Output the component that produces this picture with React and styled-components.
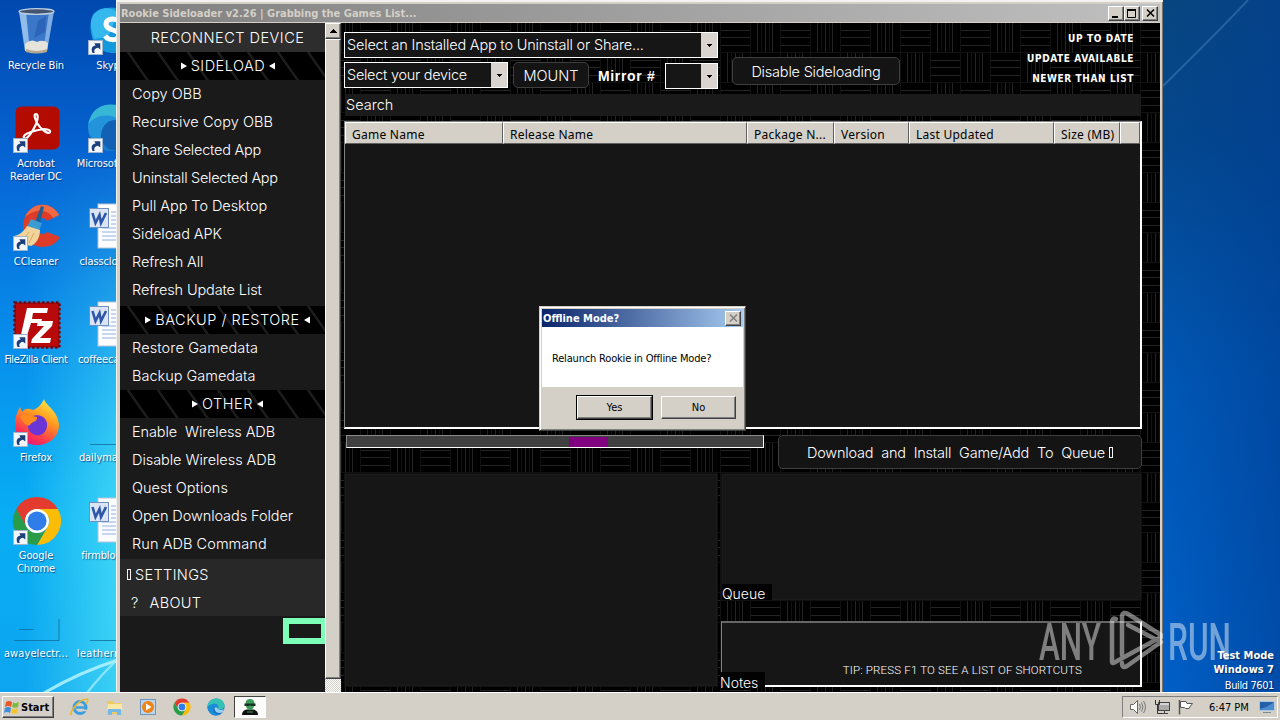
import React from 'react';
import styled, { createGlobalStyle, css } from 'styled-components';

const GlobalStyle = createGlobalStyle`
    * {
        box-sizing: border-box;
    }
    body {
        margin: 0;
        overflow: hidden;
    }
`;

const tahoma = `"DejaVu Sans Condensed", "DejaVu Sans", "Noto Sans", sans-serif`;
const noto = `"Noto Sans", "Open Sans", sans-serif`;
const thin = `Inter, "Liberation Sans", Arial, sans-serif`;

/* ---------- desktop ---------- */

const Desktop = styled.div`
    position: relative;
    width: 1280px;
    height: 720px;
    display: flex;
    flex-direction: column;
    overflow: hidden;
    background: #0a63c8;
`;

const Wallpaper = styled.svg`
    position: absolute;
    inset: 0;
`;

const IconGrid = styled.div`
    position: relative;
    flex: 1;
    display: grid;
    grid-template-columns: 72px 76px;
    grid-template-rows: repeat(7, 98px);
    grid-auto-flow: column;
    justify-content: start;
    padding-top: 7px;
    column-gap: 1px;
    height: 692px;
`;

const IconCell = styled.div`
    display: flex;
    flex-direction: column;
    align-items: center;
    min-width: 0;
    svg {
        flex: none;
        margin-left: 2px;
        overflow: visible;
    }
`;

const IconLabel = styled.span`
    margin-top: 4px;
    color: #fff;
    font-family: ${tahoma};
    font-size: 11px;
    line-height: 13px;
    letter-spacing: ${p => p.$track || -0.1}px;
    text-align: center;
    white-space: pre;
    text-shadow: 1px 1px 1px rgba(0,20,70,0.6);
`;

/* ---------- main window ---------- */

const Window = styled.div`
    position: absolute;
    left: 116px;
    top: 0;
    width: 1047px;
    height: 692px;
    padding: 4px 3px 0 4px;
    display: flex;
    flex-direction: column;
    background: #d4d0c8;
    box-shadow: inset 1px 2px 0 #f4f2ee, inset -1px 0 0 #77756e, inset 0 1px 0 #d4d0c8;
`;

const TitleBar = styled.div`
    height: 19px;
    flex: none;
    display: flex;
    align-items: center;
    padding: 0 2px 0 1px;
    background: linear-gradient(90deg, #808080, #c0c0c0);
    border-bottom: 1px solid #d4d0c8;
    color: #d4d0c8;
    font: bold 11px ${tahoma};
`;

const TitleText = styled.span`
    flex: 1;
    white-space: pre;
    letter-spacing: ${p => p.$track || 0}px;
`;

const raised = css`
    background: #d4d0c8;
    border: 1px solid;
    border-color: #fff #404040 #404040 #fff;
    box-shadow: inset -1px -1px 0 #808080;
`;

const CaptionButton = styled.div`
    ${raised}
    width: 16px;
    height: 15px;
    display: flex;
    align-items: center;
    justify-content: center;
    margin-left: ${p => p.$gap || 0}px;
`;

const Body = styled.div`
    flex: 1;
    display: flex;
    min-height: 0;
`;

const Sidebar = styled.div`
    width: 205px;
    background: #1a1a1a;
    display: flex;
    flex-direction: column;
    overflow: hidden;
    font-family: ${thin};
    font-weight: 300;
    font-size: 14.5px;
    color: #fff;
`;

const Reconnect = styled.div`
    height: 29px;
    line-height: 30px;
    padding-left: 10px;
    text-align: center;
    background: #2d2d2d;
    letter-spacing: 0.5px;
    flex: none;
`;

const SectionHead = styled.div`
    height: 28px;
    flex: none;
    display: flex;
    align-items: center;
    justify-content: center;
    gap: 4px;
    padding: 0 0 1px ${p => p.$shift || 0}px;
    margin-top: ${p => p.$top || 0}px;
    letter-spacing: 0.5px;
    white-space: pre;
    background: repeating-linear-gradient(55deg, #000 0, #000 21px, #1c1c1c 21.5px, #1c1c1c 23.5px, #000 24px, #000 24.6px);
`;

const SideItem = styled.div`
    height: 28px;
    line-height: 28px;
    flex: none;
    padding-left: 12px;
    white-space: pre;
    letter-spacing: ${p => p.$track || 0}px;
`;

const SideFooter = styled.div`
    margin-top: 1px;
    padding-top: 1px;
    background: #282828;
    flex: none;
`;

const FooterItem = styled.div`
    height: 28px;
    display: flex;
    align-items: center;
    padding-left: ${p => p.$pad}px;
    gap: ${p => p.$gap}px;
    letter-spacing: 0.35px;
`;

const Tofu = styled.i`
    display: inline-block;
    width: 4px;
    height: 11px;
    border: 1px solid #f4f4f4;
`;

const GreenFrame = styled.div`
    width: 44px;
    height: 26px;
    margin: 2px 0 0 163px;
    flex: none;
    border: 6px solid #7dffb8;
`;

const Scrollbar = styled.div`
    width: 16px;
    display: flex;
    flex-direction: column;
    background: repeating-conic-gradient(#fff 0 25%, #d4d0c8 0 50%) 0 0 / 2px 2px;
`;

const ScrollButton = styled.div`
    ${raised}
    height: 16px;
    display: flex;
    align-items: center;
    justify-content: center;
`;

const ScrollThumb = styled.div`
    ${raised}
    height: 640px;
`;

const Main = styled.div`
    position: relative;
    flex: 1;
    display: flex;
    flex-direction: column;
    padding: 9px 18px 0 3px;
    background: #000;
    font-family: ${thin};
    font-weight: 300;
    color: #fff;
`;

const Weave = styled.svg`
    position: absolute;
    inset: 0;
    width: 100%;
    height: 100%;
`;

const TopArea = styled.div`
    position: relative;
    display: flex;
    align-items: flex-start;
    height: 62px;
`;

const Pickers = styled.div`
    width: 374px;
    display: flex;
    flex-direction: column;
    gap: 4px;
`;

const PickerRow = styled.div`
    display: flex;
    align-items: flex-start;
`;

const Combo = styled.div`
    display: flex;
    width: ${p => p.$w}px;
    height: 26px;
    margin-top: ${p => p.$top || 0}px;
    border: 1px solid #fff;
    background: #161616;
    font-size: 14.5px;
    line-height: 24px;
    padding-left: 2px;
    letter-spacing: ${p => p.$track || 0}px;
    white-space: pre;
`;

const ComboArrow = styled.div`
    margin-left: auto;
    width: 16px;
    display: flex;
    align-items: center;
    justify-content: center;
    background: #d9d4cf;
`;

const DarkButton = styled.div`
    width: ${p => p.$w}px;
    height: ${p => p.$h}px;
    margin: ${p => p.$m || 0};
    display: flex;
    align-items: center;
    justify-content: center;
    gap: 4px;
    background: #141414;
    border: 1px solid #3f3f3f;
    border-radius: 5px;
    font-size: 14.5px;
    letter-spacing: ${p => p.$track || 0}px;
    word-spacing: ${p => p.$word || 0}px;
    white-space: nowrap;
`;

const MirrorLabel = styled.span`
    margin-left: 9px;
    width: 67px;
    color: #fff;
    font: bold 14px/28px "Liberation Sans", Arial, sans-serif;
    letter-spacing: 0.65px;
    white-space: nowrap;
`;

const Legend = styled.div`
    margin: -3px 8px 0 auto;
    display: flex;
    flex-direction: column;
    align-items: flex-end;
    color: #fff;
    font: bold 10px/20px ${tahoma};
    span {
        letter-spacing: 0.6px;
    }
`;

const SearchBox = styled.div`
    position: relative;
    height: 22px;
    width: 796px;
    margin-left: 1px;
    padding-left: 1px;
    background: #1a1a1a;
    font-size: 14.5px;
    line-height: 22px;
    letter-spacing: 0;
`;

const GameList = styled.div`
    position: relative;
    margin-top: 5px;
    width: 798px;
    height: 308px;
    background: #161616;
    border: solid;
    border-width: 1px 2px 2px 1px;
    border-color: #808080 #fff #fff #808080;
`;

const ListHeader = styled.div`
    display: flex;
    height: 22px;
    background: #d4d0c8;
    font: 12px/23px ${noto};
    color: #000;
`;

const HeadCell = styled.div`
    width: ${p => p.$w}px;
    flex: ${p => (p.$w ? 'none' : 1)};
    padding-left: 6px;
    letter-spacing: 0.25px;
    white-space: nowrap;
    border: 1px solid;
    border-color: #fff #606060 #606060 #fff;
`;

const ActionRow = styled.div`
    position: relative;
    display: flex;
    justify-content: space-between;
    align-items: flex-start;
    margin-top: 6px;
    padding-left: 2px;
`;

const Progress = styled.div`
    width: 418px;
    height: 13px;
    padding: 1px 0 0 222px;
    border: 1px solid;
    border-color: #8a8a8a #fff #fff #8a8a8a;
    background: #404040;
`;

const Chunk = styled.div`
    width: 39px;
    height: 10px;
    background: #800080;
`;

const LowerArea = styled.div`
    position: relative;
    margin-top: 4px;
    height: 215px;
    display: flex;
    gap: 3px;
`;

const Panel = styled.div`
    width: ${p => p.$w || 374}px;
    height: ${p => p.$h || 214}px;
    background: #161616;
    border: 1px solid #101010;
    box-shadow: inset 0 0 0 1px #1b1b1b;
    display: flex;
    align-items: flex-end;
`;

const RightStack = styled.div`
    display: flex;
    flex-direction: column;
    gap: 20px;
`;

const NotesPanel = styled.div`
    position: relative;
    width: 421px;
    height: 66px;
    padding: 40px 58px 0 0;
    text-align: right;
    background: #161616;
    border: solid;
    border-width: 2px 2px 2px 1px;
    border-color: #666 #fff #fff #808080;
    font: 300 11.5px/14px Roboto, ${thin};
    letter-spacing: 0.17px;
    color: #fff;
    white-space: nowrap;
`;

const Tag = styled.span`
    width: ${p => p.$w}px;
    height: 16px;
    background: #020202;
    font: 300 14px/20px ${thin};
    padding-left: 0;
    letter-spacing: 0;
`;

const NotesTag = styled(Tag)`
    position: absolute;
    left: -2px;
    bottom: -3px;
    line-height: 21px;
    text-align: left;
`;

/* ---------- dialog ---------- */

const Dialog = styled.div`
    position: absolute;
    left: 539px;
    top: 306px;
    width: 207px;
    height: 125px;
    padding: 2px;
    background: #d4d0c8;
    border: 1px solid;
    border-color: #d4d0c8 #404040 #404040 #d4d0c8;
    box-shadow: inset 1px 1px 0 #fff, inset -1px -1px 0 #808080;
    font: 11px ${tahoma};
    color: #000;
`;

const DialogTitle = styled.div`
    height: 18px;
    display: flex;
    align-items: center;
    padding: 0 2px 0 1px;
    background: linear-gradient(90deg, #0a246a, #a6caf0);
    color: #fff;
    font-weight: bold;
`;

const DialogText = styled.div`
    height: 60px;
    padding-left: 10px;
    line-height: 63px;
    background: #fff;
    letter-spacing: -0.18px;
    white-space: nowrap;
`;

const DialogButtons = styled.div`
    display: flex;
    justify-content: flex-end;
    gap: 9px;
    padding: 9px 7px 0 0;
`;

const DialogButton = styled.div`
    ${raised}
    width: 75px;
    height: 23px;
    line-height: 22px;
    text-align: center;
    outline: ${p => (p.$focus ? '1px solid #000' : 'none')};
    outline-offset: 0;
`;

/* ---------- taskbar ---------- */

const Taskbar = styled.div`
    position: relative;
    height: 28px;
    flex: none;
    display: flex;
    align-items: center;
    padding: 2px 2px 0;
    background: #d4d0c8;
    box-shadow: inset 0 1px 0 #fff;
    font: 11px ${tahoma};
    color: #000;
`;

const StartButton = styled.div`
    ${raised}
    width: 52px;
    height: 22px;
    display: flex;
    align-items: center;
    gap: 1px;
    padding-left: 1px;
    font-weight: bold;
    letter-spacing: 0;
`;

const QuickLaunch = styled.div`
    display: flex;
    align-items: center;
    gap: 14px;
    margin-left: 16px;
`;

const ActiveTask = styled.div`
    width: 32px;
    height: 22px;
    margin-left: 8px;
    display: flex;
    justify-content: center;
    align-items: center;
    background: #fbfbfa;
    border: 1px solid;
    border-color: #404040 #fff #fff #404040;
`;

const Tray = styled.div`
    margin-left: auto;
    width: 156px;
    height: 22px;
    display: flex;
    align-items: center;
    padding: 0 2px 0 6px;
    border: 1px solid;
    border-color: #808080 #fff #fff #808080;
    svg {
        flex: none;
        margin-right: 7px;
    }
    svg:last-child {
        margin: 0 0 0 auto;
    }
`;

const Clock = styled.span`
    margin-left: 7px;
    white-space: nowrap;
`;

const BuildInfo = styled.div`
    position: absolute;
    right: 6px;
    top: 649px;
    color: #fff;
    text-align: right;
    font: bold 11px/14px ${tahoma};
    text-shadow: 1px 1px 1px rgba(0,10,50,0.6);
    p {
        margin: 0;
    }
    p:last-child {
        margin-top: 2px;
        font-weight: normal;
        letter-spacing: -0.4px;
    }
`;

const Watermark = styled.svg`
    position: absolute;
    left: 1030px;
    top: 605px;
    opacity: 0.45;
`;

/* ---------- drawings ---------- */

const Shortcut = () => (
    <g transform="translate(0 33)">
        <rect x="0.5" y="0.5" width="14" height="14" fill="#f2f6fb" stroke="#9fb4cc" />
        <path d="M4.6 13 C2.6 9 4 6 7.6 5.6 L6.3 3.2 L12.3 3.2 L12.3 9.6 L10 7.8 C6.6 8.6 5.6 10.4 6.8 13Z" fill="#1c3f7a" />
    </g>
);

const Icon = ({ children, plain }) => (
    <svg width="48" height="48" viewBox="0 0 48 48">
        {children}
        {!plain && <Shortcut />}
    </svg>
);

const RecycleArt = () => (
    <Icon plain>
        <path d="M6 4 L12 44 Q24 48 34 44 L41 4Z" fill="#4f86cf" fillOpacity="0.75" />
        <path d="M6 4 L12 44 L17 45 L13 5Z" fill="#a8cdf2" fillOpacity="0.8" />
        <path d="M36 5 L30 45 L34 44 L41 4Z" fill="#91b9e8" fillOpacity="0.8" />
        <path d="M25 14 L33 9 L32 25 L21 31Z" fill="#1f56ab" fillOpacity="0.55" />
        <path d="M12 37 Q18 31 24 35 Q30 32 35 36 L34 44 Q23 47 12 44Z" fill="#e6e4da" />
        <path d="M13 42 Q24 46 34 42 L34 45 Q23 48 13 45Z" fill="#b4a893" />
        <ellipse cx="23.5" cy="4.5" rx="17.5" ry="2.8" fill="#42546e" stroke="#bfd0e2" strokeWidth="1.3" />
    </Icon>
);

const AcrobatArt = () => (
    <Icon>
        <rect x="2.5" y="1.5" width="44" height="43" rx="6" fill="#b30b00" />
        <path d="M11 33 C9 30 16 27 25 25 C33 23 38 25 37 27 C36 30 28 25 24 18 C21 12 21 9 23 9 C26 9 25 17 20 25 C16 32 12 35 11 33Z" fill="none" stroke="#fff" strokeWidth="2.2" />
    </Icon>
);

const CCleanerArt = () => (
    <Icon>
        <path d="M46 12 C38 -3 18 -1 12 14 C6 30 14 43 29 44 C38 44 44 40 47 34 L34 29 C29 34 22 29 24 21 C26 14 31 13 34 18Z" fill="#de3c28" />
        <path d="M46 12 C38 -3 18 -1 12 14 C24 4 36 7 40 15Z" fill="#f06a45" />
        <path d="M28 3 L31 4 L27 20 L22 19Z" fill="#1f5f93" />
        <path d="M18 16 L29 20 L26 28 L14 24Z" fill="#3b9bd3" />
        <path d="M14 23 L27 27 C27 34 24 40 18 43 L1 39 L1 33 C7 32 11 28 14 23Z" fill="#f2d49b" />
        <path d="M16 29 L10 37 M21 30 L16 40" stroke="#d7a95c" fill="none" />
    </Icon>
);

const FileZillaArt = () => (
    <Icon>
        <rect x="1.5" y="1.5" width="45" height="45" fill="#b00000" stroke="#6c0a10" strokeWidth="2.4" strokeDasharray="2.4 2.2" />
        <rect x="3" y="3" width="42" height="42" fill="#b80a0a" />
        <path d="M14 7 H35 L34 12 H20 L19 18 H29 L28 22 H18 L13 38 H7Z" fill="#fff" />
        <path d="M25 20 H40 L39 25 L27 37 H38 L37 42 H18 L19 38 L31 25 H24Z" fill="#fff" />
    </Icon>
);

const FirefoxArt = () => (
    <Icon>
        <defs>
            <linearGradient id="fx" x1="0.8" y1="0" x2="0.3" y2="1">
                <stop offset="0" stopColor="#fff04a" />
                <stop offset="0.4" stopColor="#ff9a1f" />
                <stop offset="0.8" stopColor="#ff3550" />
                <stop offset="1" stopColor="#e3157f" />
            </linearGradient>
        </defs>
        <path d="M31 0 C32 6 45 11 46 26 C46 38 36 46 24 46 C11 46 2 37 2 25 C2 17 5 12 7 8 L9 13 C12 9 15 9 20 11 C24 10 29 5 31 0Z" fill="url(#fx)" />
        <path d="M15 23 C16 15 31 13 34 24 C35 33 28 38 22 36 C16 34 14 29 15 23Z" fill="#6a35d4" />
        <path d="M7 17 C13 14 19 17 24 18 C25 23 19 22 17 26 C14 28 10 24 7 17Z" fill="#ff8a1e" />
    </Icon>
);

const ChromeMark = () => (
    <>
        <path d="M3.2 12 A24 24 0 0 1 44.8 12 L24 12 A12 12 0 0 0 13.6 30Z" fill="#e33b2e" />
        <path d="M44.8 12 A24 24 0 0 1 24 48 L34.4 30 A12 12 0 0 0 34.4 18 L24 12Z" fill="#fbbc05" />
        <path d="M24 48 A24 24 0 0 1 3.2 12 L13.6 30 A12 12 0 0 0 34.4 30Z" fill="#2a9b48" />
        <circle cx="24" cy="24" r="12" fill="#fff" />
        <circle cx="24" cy="24" r="9.6" fill="#2f7de8" />
    </>
);

const ChromeArt = () => <Icon><ChromeMark /></Icon>;

const SkypeArt = () => (
    <Icon>
        <path d="M14 2 C26 -2 40 2 44 14 C50 28 44 44 30 46 C18 47 6 42 4 30 C0 16 4 6 14 2Z" fill="#1499dd" />
        <path d="M5 8 C12 -1 24 0 30 6 L20 30 L6 32 C2 20 2 14 5 8Z" fill="#35b8ee" />
        <path d="M32 15 C26 10 18 12 18 17 C18 24 31 22 31 28 C31 34 21 34 17 29" fill="none" stroke="#fff" strokeWidth="5" />
    </Icon>
);

const EdgeMark = () => (
    <>
        <circle cx="24" cy="24" r="24" fill="#1470c4" />
        <path d="M0 24 C2 -6 46 -8 48 20 C48 30 36 34 29 30 C34 20 24 12 14 16 C6 18 2 22 0 24Z" fill="#35c2b6" />
        <path d="M14 16 C24 12 34 20 29 28 C22 20 14 26 17 36 C21 44 30 46 38 43 C22 54 2 44 0 24 C4 20 8 17 14 16Z" fill="#1c8ed8" />
        <path d="M29 30 C36 34 44 32 46 29 L44 37 C34 44 22 40 20 30 C19 25 24 22 29 28Z" fill="#c9efff" fillOpacity="0.75" />
    </>
);

// the desktop shortcut only shows the left side of the wave
const EdgeArt = () => (
    <Icon>
        <path d="M0 24 C2 -6 46 -8 48 20 L40 46 H18 C6 42 0 34 0 24Z" fill="#1b78cc" />
        <path d="M0 20 C4 0 18 -2 30 0 L40 20 C28 10 8 8 0 20Z" fill="#36b7d6" />
        <path d="M0 20 C8 8 24 8 34 16 C22 12 12 20 13 34 L14 40 C3 36 0 28 0 20Z" fill="#2394dc" />
        <path d="M34 16 C22 12 12 20 13 34 C16 44 26 47 36 46Z" fill="#1361b5" />
    </Icon>
);

const WordArt = () => (
    <Icon plain>
        <rect x="10" y="1" width="36" height="44" fill="#fdfdff" stroke="#b7c4d8" />
        <path d="M23 9 H42 M23 13 H42 M23 17 H42 M23 21 H42 M14 25 H42 M14 29 H42 M14 33 H42 M14 37 H42" stroke="#8fb0de" />
        <rect x="1.5" y="5.5" width="19" height="19" fill="#dbe5f5" stroke="#6f8fc2" />
        <path d="M4.5 10 L7.5 20 L11.5 12 L13 20 L18 10" fill="none" stroke="#2d57a8" strokeWidth="2.6" />
    </Icon>
);

const BlankArt = ({ full }) => (
    <Icon plain>
        <path d={full ? 'M1 45.5 H46 V24 M6 34.5 H21' : 'M2 45.5 H48'} fill="none" stroke="#0f6d9b" strokeOpacity="0.8" />
    </Icon>
);

const Arrow = ({ left }) => (
    <svg width="6" height="8" viewBox="0 0 6 8">
        <path d={left ? 'M6 0.5 V7.5 L0 4Z' : 'M0 0.5 V7.5 L6 4Z'} fill="#fff" />
    </svg>
);

const DownArrow = () => (
    <svg width="5" height="3" viewBox="0 0 5 3" shapeRendering="crispEdges"><path d="M0 0 H5 L2.5 3Z" /></svg>
);

const Backdrop = () => (
    <Wallpaper width="1280" height="692" viewBox="0 0 1280 692">
        <defs>
            <linearGradient id="leftSky" x1="0" y1="0" x2="0" y2="1">
                <stop offset="0" stopColor="#0048ae" />
                <stop offset="0.25" stopColor="#0667d6" />
                <stop offset="0.5" stopColor="#078fec" />
                <stop offset="0.75" stopColor="#08aef4" />
                <stop offset="1" stopColor="#0da5f0" />
            </linearGradient>
            <linearGradient id="glow" x1="0" y1="0" x2="1" y2="0">
                <stop offset="0.2" stopColor="#5ff0f8" stopOpacity="0" />
                <stop offset="1" stopColor="#5ff0f8" stopOpacity="0.6" />
            </linearGradient>
            <linearGradient id="glowFade" x1="0" y1="0" x2="0" y2="1">
                <stop offset="0.2" stopColor="#000" />
                <stop offset="0.7" stopColor="#fff" />
            </linearGradient>
            <mask id="glowMask"><rect width="120" height="692" fill="url(#glowFade)" /></mask>
            <linearGradient id="rightSky" x1="0" y1="0" x2="0" y2="1">
                <stop offset="0" stopColor="#08467f" />
                <stop offset="0.2" stopColor="#04478d" />
                <stop offset="0.55" stopColor="#0058b6" />
                <stop offset="1" stopColor="#0060c8" />
            </linearGradient>
            <linearGradient id="rightEdge" x1="0" y1="0" x2="1" y2="0">
                <stop offset="0" stopColor="#003c90" stopOpacity="0" />
                <stop offset="1" stopColor="#003c90" stopOpacity="0.55" />
            </linearGradient>
        </defs>
        <rect width="640" height="692" fill="url(#leftSky)" />
        <rect width="120" height="692" fill="url(#glow)" mask="url(#glowMask)" />
        <rect x="1160" width="120" height="692" fill="url(#rightSky)" />
        <rect x="1160" width="120" height="692" fill="url(#rightEdge)" />
        <path d="M1163 86 Q1215 35 1248 0" stroke="#6fa5d8" strokeOpacity="0.3" strokeWidth="2" fill="none" />
        <path d="M44 693 Q80 672 118 660" stroke="#b5f4ff" strokeOpacity="0.85" strokeWidth="3" fill="none" />
        <path d="M87 693 Q100 676 118 659" stroke="#9deeff" strokeOpacity="0.8" strokeWidth="2.4" fill="none" />
    </Wallpaper>
);

const WeaveBack = () => (
    <Weave>
        <defs>
            <pattern id="weave" x="19" y="0" width="60" height="60" patternUnits="userSpaceOnUse">
                <path
                    d="M0 7.5 H30 M0 14.5 H30 M0 22.5 H30 M37.5 0 V30 M45.5 0 V30 M52.5 0 V30 M30 37.5 H60 M30 44.5 H60 M30 52.5 H60 M7.5 30 V60 M15.5 30 V60 M22.5 30 V60"
                    stroke="#242424"
                />
                <path
                    d="M0 29.5 H60 M0 59.5 H60 M0.5 0 V60 M30.5 0 V60 M41.5 0 V30 M49.5 0 V30 M11.5 30 V60 M19.5 30 V60"
                    stroke="#111"
                />
            </pattern>
        </defs>
        <rect width="100%" height="100%" fill="url(#weave)" />
    </Weave>
);

const icons = [
    { art: <RecycleArt />, label: 'Recycle Bin' },
    { art: <AcrobatArt />, label: 'Acrobat\nReader DC' },
    { art: <CCleanerArt />, label: 'CCleaner' },
    { art: <FileZillaArt />, label: 'FileZilla Client', track: -0.4 },
    { art: <FirefoxArt />, label: 'Firefox' },
    { art: <ChromeArt />, label: 'Google\nChrome' },
    { art: <BlankArt full />, label: 'awayelectr...', track: 0.1 },
    { art: <SkypeArt />, label: 'Skype' },
    { art: <EdgeArt />, label: 'Microsoft Ed...' },
    { art: <WordArt />, label: 'classclothe...' },
    { art: <WordArt />, label: 'coffeecame...' },
    { art: <BlankArt />, label: 'dailymakes...' },
    { art: <WordArt />, label: 'firmblocks...' },
    { art: <BlankArt />, label: 'leathermay...', track: 0.3 },
];

const sideload = [
    ['Copy OBB', 0],
    ['Recursive Copy OBB', 0.05],
    ['Share Selected App', -0.23],
    ['Uninstall Selected App', -0.28],
    ['Pull App To Desktop', -0.05],
    ['Sideload APK', -0.08],
    ['Refresh All', -0.1],
    ['Refresh Update List', -0.12],
];
const backup = [['Restore Gamedata', 0.13], ['Backup Gamedata', 0]];
const other = [
    ['Enable  Wireless ADB', -0.1],
    ['Disable Wireless ADB', -0.05],
    ['Quest Options', 0],
    ['Open Downloads Folder', -0.08],
    ['Run ADB Command', 0.07],
];

const columns = [
    ['Game Name', 158],
    ['Release Name', 244],
    ['Package N...', 87],
    ['Version', 75],
    ['Last Updated', 145],
    ['Size (MB)', 66],
    ['', 0],
];

const SideItems = ({ items }) => items.map(([text, track]) => <SideItem key={text} $track={track}>{text}</SideItem>);

const App = () => {
    return (
        <Desktop>
            <GlobalStyle />
            <Backdrop />
            <IconGrid>
                {icons.map(item => (
                    <IconCell key={item.label}>
                        {item.art}
                        <IconLabel $track={item.track}>{item.label}</IconLabel>
                    </IconCell>
                ))}
            </IconGrid>
            <BuildInfo>
                <p>Test Mode</p>
                <p>Windows 7</p>
                <p>Build 7601</p>
            </BuildInfo>

            <Window>
                <TitleBar>
                    <TitleText>Rookie Sideloader v2.26 | Grabbing the Games List...</TitleText>
                    <CaptionButton>
                        <svg width="10" height="9"><path d="M1 8 H7" stroke="#000" strokeWidth="2" /></svg>
                    </CaptionButton>
                    <CaptionButton>
                        <svg width="10" height="9"><path d="M0.5 0 V8.5 H8.5 V0 M0 1 H9" fill="none" stroke="#000" /><path d="M0 1 H9" stroke="#000" strokeWidth="2" /></svg>
                    </CaptionButton>
                    <CaptionButton $gap={2}>
                        <svg width="9" height="8"><path d="M1 0.5 L8 7.5 M8 0.5 L1 7.5" stroke="#000" strokeWidth="1.5" /></svg>
                    </CaptionButton>
                </TitleBar>
                <Body>
                    <Sidebar>
                        <Reconnect>RECONNECT DEVICE</Reconnect>
                        <SectionHead $shift={11}><Arrow />SIDELOAD<Arrow left /></SectionHead>
                        <SideItems items={sideload} />
                        <SectionHead $top={2} $shift={10}><Arrow />BACKUP / RESTORE<Arrow left /></SectionHead>
                        <SideItems items={backup} />
                        <SectionHead $shift={10}><Arrow />OTHER<Arrow left /></SectionHead>
                        <SideItems items={other} />
                        <SideFooter>
                            <FooterItem $pad={7} $gap={4}><Tofu /><span>SETTINGS</span></FooterItem>
                            <FooterItem $pad={11} $gap={11}><span>?</span><span>ABOUT</span></FooterItem>
                        </SideFooter>
                        <GreenFrame />
                    </Sidebar>
                    <Scrollbar>
                        <ScrollButton>
                            <svg width="7" height="4" shapeRendering="crispEdges"><path d="M0 4 L3.5 0 L7 4Z" /></svg>
                        </ScrollButton>
                        <ScrollThumb />
                    </Scrollbar>
                    <Main>
                        <WeaveBack />
                        <TopArea>
                            <Pickers>
                                <Combo $w={374} $track={-0.19}>
                                    Select an Installed App to Uninstall or Share...
                                    <ComboArrow><DownArrow /></ComboArrow>
                                </Combo>
                                <PickerRow>
                                    <Combo $w={164} $track={-0.28}>
                                        Select your device
                                        <ComboArrow><DownArrow /></ComboArrow>
                                    </Combo>
                                    <DarkButton $w={76} $h={26} $m="0 0 0 5px">MOUNT</DarkButton>
                                    <MirrorLabel>Mirror #</MirrorLabel>
                                    <Combo $w={53} $top={1}>
                                        <ComboArrow><DownArrow /></ComboArrow>
                                    </Combo>
                                </PickerRow>
                            </Pickers>
                            <DarkButton $w={168} $h={28} $m="25px 0 0 14px" $track={-0.2}>Disable Sideloading</DarkButton>
                            <Legend>
                                <span>UP TO DATE</span>
                                <span>UPDATE AVAILABLE</span>
                                <span>NEWER THAN LIST</span>
                            </Legend>
                        </TopArea>
                        <SearchBox>Search</SearchBox>
                        <GameList>
                            <ListHeader>
                                {columns.map(([name, w]) => <HeadCell key={name} $w={w}>{name}</HeadCell>)}
                            </ListHeader>
                        </GameList>
                        <ActionRow>
                            <Progress><Chunk /></Progress>
                            <DarkButton $w={364} $h={34} $word={4} $track={-0.2}>
                                <span>Download and Install Game/Add To Queue</span>
                                <Tofu />
                            </DarkButton>
                        </ActionRow>
                        <LowerArea>
                            <Panel />
                            <RightStack>
                                <Panel $w={421} $h={128}><Tag $w={50}>Queue</Tag></Panel>
                                <NotesPanel>
                                    TIP: PRESS F1 TO SEE A LIST OF SHORTCUTS
                                    <NotesTag $w={45}>Notes</NotesTag>
                                </NotesPanel>
                            </RightStack>
                        </LowerArea>
                    </Main>
                </Body>
            </Window>

            <Dialog>
                <DialogTitle>
                    <TitleText>Offline Mode?</TitleText>
                    <CaptionButton>
                        <svg width="9" height="8"><path d="M1 0.5 L8 7.5 M8 0.5 L1 7.5" stroke="#808080" strokeWidth="1.5" /></svg>
                    </CaptionButton>
                </DialogTitle>
                <DialogText>Relaunch Rookie in Offline Mode?</DialogText>
                <DialogButtons>
                    <DialogButton $focus>Yes</DialogButton>
                    <DialogButton>No</DialogButton>
                </DialogButtons>
            </Dialog>

            <Taskbar>
                <StartButton>
                    <svg width="16" height="16" viewBox="0 0 16 16">
                        <path d="M2 3 Q5 1 8 3 L7 8 Q4 6 1 8Z" fill="#e8562a" />
                        <path d="M9 3.5 Q12 5 15 3 L14 8 Q11 9.5 8 8Z" fill="#7cba3d" />
                        <path d="M1 9 Q4 7 7 9 L6 14 Q3 12 0 14Z" fill="#3f8edb" />
                        <path d="M8 9.5 Q11 11 14 9 L13 14 Q10 15.5 7 14Z" fill="#f7c52d" />
                    </svg>
                    Start
                </StartButton>
                <QuickLaunch>
                    <svg width="20" height="20" viewBox="0 0 20 20">
                        <circle cx="10" cy="10.5" r="6" fill="none" stroke="#3a9ee0" strokeWidth="3" />
                        <path d="M6 10.5 H15" stroke="#3a9ee0" strokeWidth="2.4" />
                        <path d="M12 13.5 H19" stroke="#d4d0c8" strokeWidth="1.6" />
                        <path d="M2 17 Q-1 18 3 12 Q10 2 17 2 Q19 3 16 7" fill="none" stroke="#edb62c" strokeWidth="1.5" />
                    </svg>
                    <svg width="20" height="20" viewBox="0 0 20 20">
                        <path d="M3 4 H9 L10 6 H17 V17 H3Z" fill="#eecb62" />
                        <path d="M4 7 H18 V13 H3Z" fill="#fae9a4" />
                        <path d="M4 18 V12 H17 V18 H13 V15 H8 V18Z" fill="#76b9e2" />
                    </svg>
                    <svg width="20" height="20" viewBox="0 0 20 20">
                        <rect x="2.5" y="2.5" width="15" height="15" fill="#b9d6ee" stroke="#6f97bd" />
                        <circle cx="10" cy="10" r="6" fill="#f08316" />
                        <path d="M8 6.5 L13.5 10 L8 13.5Z" fill="#fff" />
                    </svg>
                    <svg width="20" height="20" viewBox="-4 -4 56 56"><ChromeMark /></svg>
                    <svg width="20" height="20" viewBox="-4 -4 56 56"><EdgeMark /></svg>
                </QuickLaunch>
                <ActiveTask>
                    <svg width="18" height="18" viewBox="0 0 18 18">
                        <path d="M1 17 Q1 12 6 11.5 H12 Q17 12 17 17Z" fill="#111" />
                        <path d="M4.5 6 Q4.5 1 9 1 Q13.5 1 13.5 6 Q13 11 9 12.5 Q5 11 4.5 6Z" fill="#3c9c58" />
                        <path d="M3.5 5.5 H14.5 V8 H10 L9 7 L8 8 H3.5Z" fill="#16301f" />
                        <path d="M6 14 H12" stroke="#3c9c58" />
                    </svg>
                </ActiveTask>
                <Tray>
                    <svg width="18" height="16" viewBox="0 0 18 16">
                        <path d="M1.5 5.5 H4.5 L8.5 1.5 V14.5 L4.5 10.5 H1.5Z" fill="#fff" stroke="#666" />
                        <path d="M10.5 5 Q12.5 8 10.5 11 M12.5 3.5 Q15.5 8 12.5 12.5 M14.5 2 Q18.5 8 14.5 14" fill="none" stroke="#777" />
                    </svg>
                    <svg width="17" height="16" viewBox="0 0 17 16">
                        <rect x="4.5" y="3.5" width="11" height="8" fill="#aaa" stroke="#444" />
                        <path d="M5 5 H15" stroke="#fff" />
                        <path d="M1.5 1 V5.5 H5.5 V1 M3.5 5.5 V14.5 H8" fill="none" stroke="#333" />
                        <path d="M8 14.5 H14 M10.5 12 V14" stroke="#444" />
                    </svg>
                    <svg width="17" height="16" viewBox="0 0 17 16">
                        <path d="M1.5 1 V15.5" stroke="#555" strokeWidth="1.5" />
                        <path d="M2.5 2.5 H8 L9 4.5 H14.5 L12.5 7 L11 9.5 H7.5 L6.5 8.5 H2.5Z" fill="#fff" stroke="#555" />
                    </svg>
                    <Clock>6:47 PM</Clock>
                    <svg width="16" height="14" viewBox="0 0 16 14">
                        <rect x="0.5" y="1.5" width="14.5" height="9" fill="#235fa8" stroke="#a6c4e4" />
                        <path d="M1 9 Q8 8 15 2 V10 H1Z" fill="#4a8bd0" />
                        <path d="M4 12.5 H12" stroke="#7d8b9b" />
                    </svg>
                </Tray>
            </Taskbar>

            <Watermark width="210" height="70" viewBox="0 0 210 70">
                <g fill="#fff" fontFamily="Roboto" fontSize="52" fontWeight="500">
                    <text x="9" y="55" textLength="62" lengthAdjust="spacingAndGlyphs">ANY</text>
                    <text x="138" y="55" textLength="63" lengthAdjust="spacingAndGlyphs">RUN</text>
                </g>
                <g fill="none" stroke="#fff" strokeWidth="4.5" strokeLinejoin="round" strokeLinecap="round">
                    <path d="M86 14 Q82 12 82 18 V56 Q82 60 87 56 L131 32" />
                    <path d="M92 50 V11 Q93 6 98 9 L131 30" />
                    <path d="M98 20 L131 37 L97 61 Q92 64 92 58" />
                </g>
            </Watermark>
        </Desktop>
    );
};

export default App;
